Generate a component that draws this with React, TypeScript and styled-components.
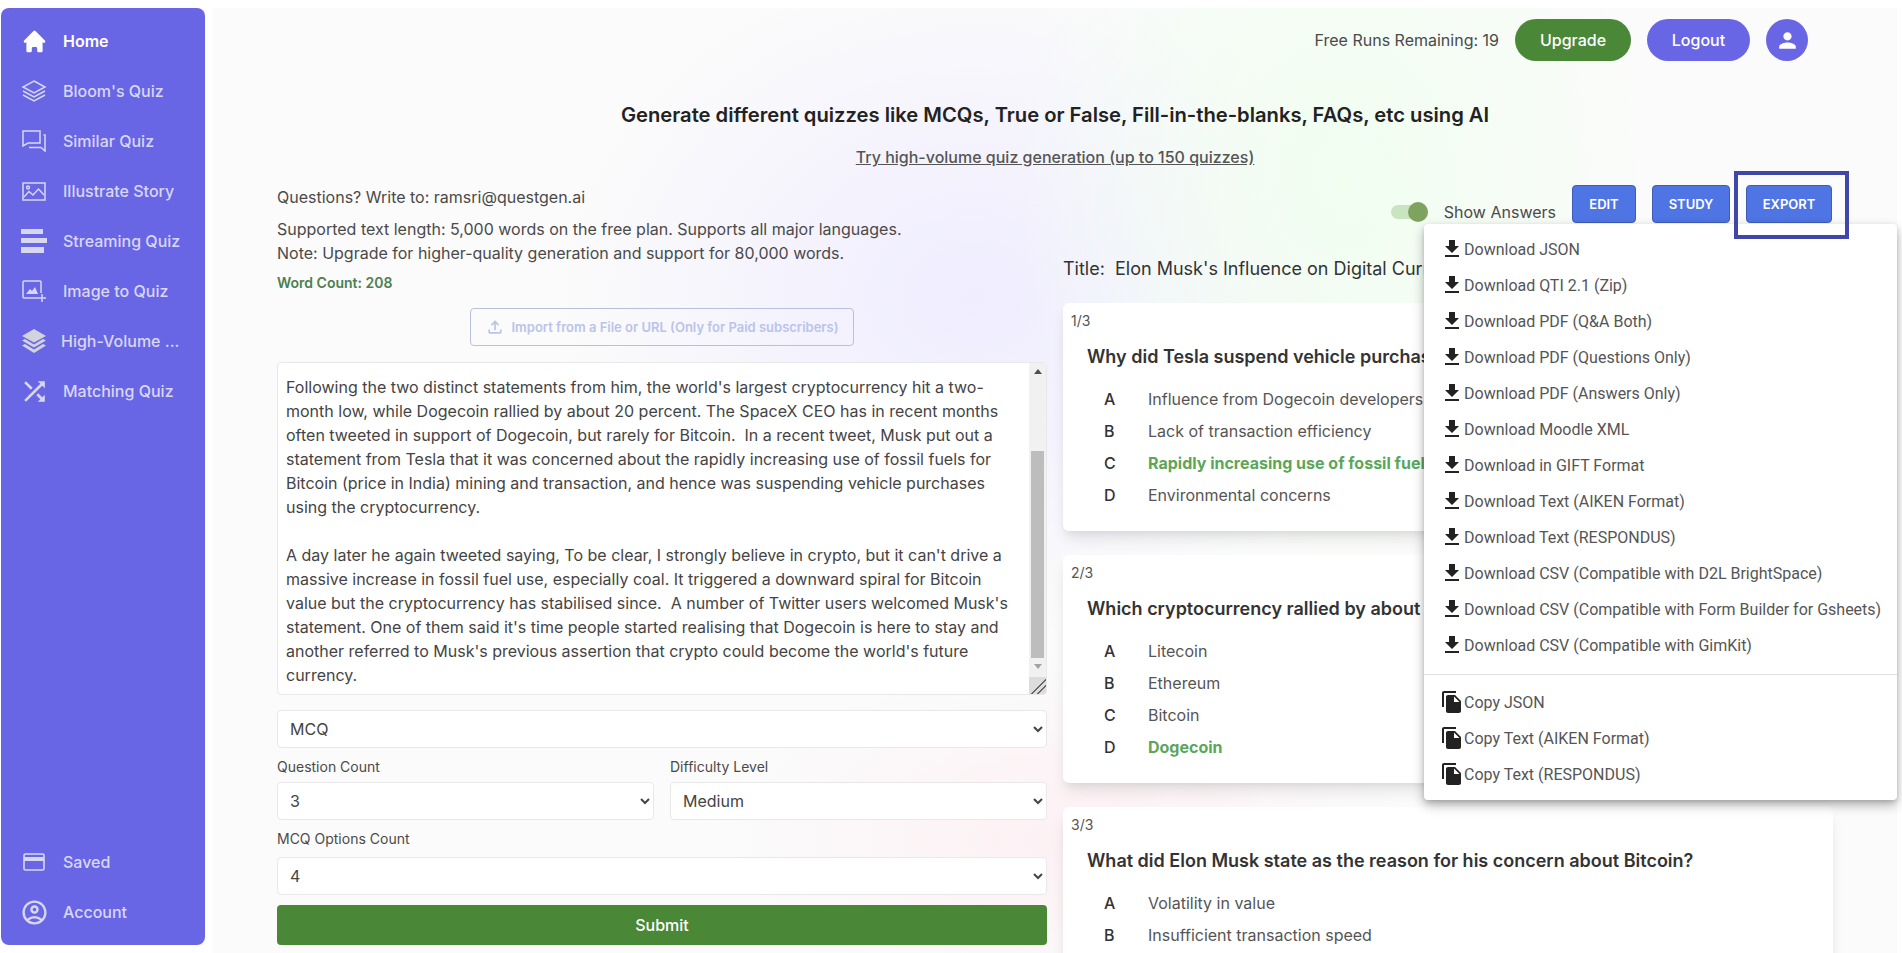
import React from "react";
import styled, { createGlobalStyle } from "styled-components";
import { HiHome } from "react-icons/hi";
import {
  MdOutlineAccountCircle,
  MdShuffle,
  MdFileDownload,
  MdFileCopy,
  MdPerson,
  MdOutlineFileUpload,
} from "react-icons/md";

const Global = createGlobalStyle`
  html, body { margin: 0; padding: 0; height: 100%; overflow: hidden; background: #fff; }
  * { box-sizing: border-box; }
  body { font-family: Inter, "Liberation Sans", sans-serif; color: #444; }
`;

const Page = styled.div`
  display: flex;
  gap: 8px;
  height: 100vh;
  padding: 8px 5px 0 1px;
  overflow: hidden;
`;

const Sidebar = styled.nav`
  flex: 0 0 204px;
  height: 937px;
  padding: 8px 0;
  display: flex;
  flex-direction: column;
  justify-content: space-between;
  background: #6966e6;
  border-radius: 8px;
`;

const NavGroup = styled.div`
  display: flex;
  flex-direction: column;
`;

const NavItem = styled.div<{ $active?: boolean; $tight?: boolean }>`
  height: 50px;
  display: flex;
  align-items: center;
  gap: ${(p) => (p.$tight ? 14 : 16)}px;
  padding-left: 20px;
  font-size: 16px;
  font-weight: ${(p) => (p.$active ? 600 : 500)};
  color: ${(p) => (p.$active ? "#ffffff" : "#d8d7f7")};
`;

const NavIcon = styled.span<{ $active?: boolean }>`
  width: 26px;
  height: 26px;
  display: flex;
  align-items: center;
  justify-content: center;
  color: ${(p) => (p.$active ? "#ffffff" : "#d8d7f0")};
  svg { display: block; flex: none; }
`;

const Main = styled.main`
  position: relative;
  flex: 1;
  min-width: 0;
  height: 1100px;
  padding: 11px 64px 0;
  background:
    radial-gradient(ellipse 330px 420px at 1130px 170px, #f1fef0 0%, rgba(241, 254, 240, 0) 100%),
    radial-gradient(ellipse 420px 340px at 760px 290px, #efedff 0%, rgba(239, 237, 255, 0) 100%),
    radial-gradient(ellipse 340px 180px at 860px 830px, #fdf0f3 0%, rgba(253, 240, 243, 0) 100%),
    #fbfbfb;
`;

const Header = styled.header`
  height: 42px;
  display: flex;
  align-items: center;
  justify-content: flex-end;
  gap: 16px;
  padding-right: 25px;
`;

const Runs = styled.span`
  font-size: 16px;
  color: #4a4a4a;
`;

const Pill = styled.button<{ $green?: boolean }>`
  height: 42px;
  width: ${(p) => (p.$green ? 116 : 103)}px;
  border: 0;
  border-radius: 21px;
  background: ${(p) => (p.$green ? "#4a8737" : "#6966e6")};
  color: #fff;
  font: 500 16px Inter, sans-serif;
`;

const Avatar = styled.div`
  width: 42px;
  height: 42px;
  border-radius: 50%;
  background: #6966e6;
  color: #fff;
  display: flex;
  align-items: center;
  justify-content: center;
`;

const Heading = styled.h1`
  margin: 40px 0 0;
  font-size: 20.2px;
  line-height: 28px;
  font-weight: 600;
  color: #222;
  text-align: center;
`;

const TryLink = styled.a`
  display: block;
  margin-top: 16px;
  font-size: 16px;
  line-height: 24px;
  font-weight: 500;
  color: #555;
  text-align: center;
  text-decoration: underline;
`;

const Columns = styled.div`
  margin-top: 16px;
  display: grid;
  grid-template-columns: 770px 770px;
  gap: 16px;
`;

const Column = styled.section`
  display: flex;
  flex-direction: column;
  min-width: 0;
`;

const InfoLine = styled.p<{ $gap?: number }>`
  margin: ${(p) => p.$gap ?? 0}px 0 0;
  font-size: 16px;
  line-height: 24px;
  color: #4a4a4a;
`;

const WordCount = styled.p`
  margin: 8px 0 0;
  font-size: 14px;
  line-height: 20px;
  font-weight: 600;
  color: #4b8050;
`;

const ImportButton = styled.button`
  align-self: center;
  width: 384px;
  height: 38px;
  margin-top: 15px;
  display: flex;
  align-items: center;
  justify-content: center;
  gap: 6px;
  background: transparent;
  border: 1px solid #b9c0dd;
  border-radius: 4px;
  color: #b9c4ea;
  font: 600 13px Inter, sans-serif;
`;

const TextBox = styled.div`
  height: 333px;
  margin-top: 16px;
  display: flex;
  background: #fff;
  border: 1px solid #e8e8e8;
  border-radius: 4px;
  overflow: hidden;
`;

const TextPane = styled.div`
  flex: 1;
  min-width: 0;
  padding: 12px 0 0 8px;
  font-size: 16px;
  line-height: 24px;
  color: #444;
  white-space: pre;
  overflow: hidden;
`;

const ScrollBar = styled.div`
  flex: 0 0 17px;
  display: flex;
  flex-direction: column;
  align-items: center;
  background: #f1f1f1;
`;

const Arrow = styled.div<{ $down?: boolean }>`
  height: 17px;
  width: 100%;
  display: flex;
  align-items: center;
  justify-content: center;
  &::before {
    content: "";
    border-left: 4px solid transparent;
    border-right: 4px solid transparent;
    ${(p) => (p.$down ? "border-top: 5px solid #a3a3a3;" : "border-bottom: 5px solid #505050;")}
  }
`;

const Thumb = styled.div`
  width: 13px;
  height: 207px;
  margin-top: 71px;
  background: #bdbdbd;
`;

const ResizeCorner = styled.div`
  margin-top: auto;
  width: 100%;
  height: 17px;
  background:
    linear-gradient(135deg, transparent 55%, #666 55%, #666 60%, transparent 60%, transparent 72%, #666 72%, #666 77%, transparent 77%),
    #dcdcdc;
`;

const Select = styled.select`
  display: block;
  width: 100%;
  height: 38px;
  padding: 0 8px;
  background: #fff;
  border: 1px solid #e8e8e8;
  border-radius: 4px;
  color: #444;
  font: 400 16px Inter, sans-serif;
`;

const FieldGap = styled.div<{ $top: number }>`
  margin-top: ${(p) => p.$top}px;
`;

const FieldRow = styled.div`
  margin-top: 9px;
  display: grid;
  grid-template-columns: 1fr 1fr;
  gap: 16px;
`;

const Label = styled.label<{ $mb: number }>`
  display: block;
  margin-bottom: ${(p) => p.$mb}px;
  font-size: 14px;
  line-height: 20px;
  color: #4a4a4a;
`;

const Submit = styled.button`
  height: 40px;
  margin-top: 10px;
  background: #4a8737;
  border: 0;
  border-radius: 4px;
  color: #fff;
  font: 500 16px Inter, sans-serif;
`;

const Controls = styled.div`
  height: 38px;
  display: flex;
  justify-content: flex-end;
  gap: 16px;
  padding-right: 1px;
`;

const ToggleGroup = styled.div`
  display: flex;
  align-items: center;
  gap: 16px;
  padding-top: 16px;
  height: 38px;
  font-size: 16px;
  color: #4a4a4a;
  white-space: nowrap;
`;

const Track = styled.span`
  position: relative;
  display: block;
  width: 37px;
  height: 14px;
  background: #c9e4c1;
  border-radius: 7px;
`;

const Knob = styled.span`
  position: absolute;
  top: -3px;
  right: 0;
  width: 20px;
  height: 20px;
  border-radius: 50%;
  background: #7ea35f;
`;

const ActionButton = styled.button<{ $w: number }>`
  width: ${(p) => p.$w}px;
  height: 38px;
  background: #4f75e4;
  border: 1px solid #3d5db8;
  border-radius: 4px;
  color: #fff;
  font: 600 13px Inter, sans-serif;
`;

const Highlight = styled.div`
  position: absolute;
  left: 1521px;
  top: 163px;
  width: 115px;
  height: 68px;
  border: 4px solid #3f48a8;
  pointer-events: none;
`;

const QuizTitle = styled.h2`
  margin: 32px 0 20px;
  font-size: 18px;
  line-height: 28px;
  font-weight: 400;
  color: #333;
  white-space: pre;
`;

const Card = styled.article`
  margin-bottom: 24px;
  padding: 8px 0 20px;
  background: #fff;
  border-radius: 6px;
  box-shadow: 0 10px 15px -3px rgba(0, 0, 0, 0.1), 0 4px 6px -2px rgba(0, 0, 0, 0.05);
`;

const CardIndex = styled.div`
  padding-left: 8px;
  font-size: 14px;
  line-height: 20px;
  color: #555;
`;

const Question = styled.h3`
  margin: 12px 0;
  padding-left: 24px;
  font-size: 18px;
  line-height: 28px;
  font-weight: 600;
  color: #333;
`;

const Option = styled.div`
  height: 32px;
  display: flex;
  align-items: center;
  padding-left: 41px;
  font-size: 16px;
`;

const Letter = styled.span`
  width: 44px;
  font-weight: 500;
  color: #333;
`;

const OptionText = styled.span<{ $right?: boolean }>`
  color: ${(p) => (p.$right ? "#5ca65a" : "#555")};
  font-weight: ${(p) => (p.$right ? 700 : 400)};
  white-space: nowrap;
`;

const Menu = styled.div`
  position: absolute;
  left: 1211px;
  top: 216px;
  width: 473px;
  padding: 7px 0 8px;
  background: #fff;
  border-radius: 4px;
  box-shadow: 0 5px 12px rgba(0, 0, 0, 0.3), 0 2px 4px rgba(0, 0, 0, 0.12);
`;

const MenuItem = styled.div`
  height: 36px;
  display: flex;
  align-items: center;
  padding-left: 16px;
  font-family: Roboto, sans-serif;
  font-size: 16px;
  color: #555;
  svg { flex: none; color: #222; }
`;

const MenuDivider = styled.hr`
  margin: 11px 0 9px;
  border: 0;
  border-top: 1px solid #e0e0e0;
`;

const stroke = { fill: "none", stroke: "currentColor", strokeWidth: 1.5 } as const;

const LayersLine = () => (
  <svg width="26" height="22" viewBox="0 0 26 22" {...stroke}>
    <path d="M13 1 L24 7 L13 13 L2 7 Z" />
    <path d="M2 11 L13 17 L24 11" />
    <path d="M2 15 L13 21 L24 15" />
  </svg>
);
const Chat = () => (
  <svg width="24" height="22" viewBox="0 0 24 22" {...stroke}>
    <path d="M1 1 H18 V13 H6 L1 16 Z" />
    <path d="M21.5 5 H23 V21 L19 17.5 H7" />
  </svg>
);
const Picture = () => (
  <svg width="24" height="19" viewBox="0 0 24 19" {...stroke}>
    <rect x="1" y="1" width="22" height="17" />
    <circle cx="6" cy="5.5" r="1.4" />
    <path d="M2 15 L7 9.5 L11 13 L16.5 7 L22 13" />
  </svg>
);
const Bars = () => (
  <svg width="26" height="24" viewBox="0 0 26 24" fill="currentColor">
    <rect x="0" y="0" width="22" height="5" />
    <rect x="0" y="9" width="26" height="5" />
    <rect x="0" y="18" width="23" height="6" />
  </svg>
);
const AddImage = () => (
  <svg width="24" height="22" viewBox="0 0 24 22" {...stroke}>
    <path d="M16 18 H2 Q1 18 1 17 V2 Q1 1 2 1 H18 Q19 1 19 2 V13" />
    <path d="M4 14 L8 9 L10 11 L13 7 L16 14 Z" fill="currentColor" stroke="none" />
    <path d="M20 14 V22 M16 18 H24" />
  </svg>
);
const LayersSolid = () => (
  <svg width="24" height="24" viewBox="0 0 24 24" fill="#d3d3dc">
    <path d="M12 0 L24 7 L12 13.5 L0 7 Z" />
    <path d="M0 11.5 L3 10 L12 15.5 L21 10 L24 11.5 L12 18.5 Z" />
    <path d="M0 16.5 L3 15 L12 20.5 L21 15 L24 16.5 L12 24 Z" />
  </svg>
);
const Card2 = () => (
  <svg width="22" height="18" viewBox="0 0 22 18">
    <rect x="1" y="1" width="20" height="16" rx="1.5" fill="none" stroke="currentColor" strokeWidth="1.6" />
    <rect x="1" y="4" width="20" height="4" fill="currentColor" />
  </svg>
);

const top = [
  { icon: <HiHome size={27} />, label: "Home", active: true },
  { icon: <LayersLine />, label: "Bloom's Quiz" },
  { icon: <Chat />, label: "Similar Quiz" },
  { icon: <Picture />, label: "Illustrate Story" },
  { icon: <Bars />, label: "Streaming Quiz" },
  { icon: <AddImage />, label: "Image to Quiz" },
  { icon: <LayersSolid />, label: "High-Volume ...", tight: true },
  { icon: <MdShuffle size={31} />, label: "Matching Quiz" },
];

const bottom = [
  { icon: <Card2 />, label: "Saved" },
  { icon: <MdOutlineAccountCircle size={29} />, label: "Account" },
];

const passage = `Following the two distinct statements from him, the world's largest cryptocurrency hit a two-
month low, while Dogecoin rallied by about 20 percent. The SpaceX CEO has in recent months
often tweeted in support of Dogecoin, but rarely for Bitcoin.  In a recent tweet, Musk put out a
statement from Tesla that it was concerned about the rapidly increasing use of fossil fuels for
Bitcoin (price in India) mining and transaction, and hence was suspending vehicle purchases
using the cryptocurrency.

A day later he again tweeted saying, To be clear, I strongly believe in crypto, but it can't drive a
massive increase in fossil fuel use, especially coal. It triggered a downward spiral for Bitcoin
value but the cryptocurrency has stabilised since.  A number of Twitter users welcomed Musk's
statement. One of them said it's time people started realising that Dogecoin is here to stay and
another referred to Musk's previous assertion that crypto could become the world's future
currency.`;

const quiz = [
  {
    q: "Why did Tesla suspend vehicle purchases using the cryptocurrency?",
    options: ["Influence from Dogecoin developers", "Lack of transaction efficiency", "Rapidly increasing use of fossil fuels", "Environmental concerns"],
    right: 2,
  },
  {
    q: "Which cryptocurrency rallied by about 20 percent?",
    options: ["Litecoin", "Ethereum", "Bitcoin", "Dogecoin"],
    right: 3,
  },
  {
    q: "What did Elon Musk state as the reason for his concern about Bitcoin?",
    options: ["Volatility in value", "Insufficient transaction speed", "Use of fossil fuels", "Regulation"],
    right: 2,
  },
];

const downloads = [
  "Download JSON",
  "Download QTI 2.1 (Zip)",
  "Download PDF (Q&A Both)",
  "Download PDF (Questions Only)",
  "Download PDF (Answers Only)",
  "Download Moodle XML",
  "Download in GIFT Format",
  "Download Text (AIKEN Format)",
  "Download Text (RESPONDUS)",
  "Download CSV (Compatible with D2L BrightSpace)",
  "Download CSV (Compatible with Form Builder for Gsheets)",
  "Download CSV (Compatible with GimKit)",
];

const copies = ["Copy JSON", "Copy Text (AIKEN Format)", "Copy Text (RESPONDUS)"];

export default function App() {
  return (
    <Page>
      <Global />
      <Sidebar>
        <NavGroup>
          {top.map((n) => (
            <NavItem key={n.label} $active={n.active} $tight={n.tight}>
              <NavIcon $active={n.active}>{n.icon}</NavIcon>
              {n.label}
            </NavItem>
          ))}
        </NavGroup>
        <NavGroup>
          {bottom.map((n) => (
            <NavItem key={n.label}>
              <NavIcon>{n.icon}</NavIcon>
              {n.label}
            </NavItem>
          ))}
        </NavGroup>
      </Sidebar>
      <Main>
        <Header>
          <Runs>Free Runs Remaining: 19</Runs>
          <Pill $green>Upgrade</Pill>
          <Pill>Logout</Pill>
          <Avatar>
            <MdPerson size={25} />
          </Avatar>
        </Header>
        <Heading>Generate different quizzes like MCQs, True or False, Fill-in-the-blanks, FAQs, etc using AI</Heading>
        <TryLink>Try high-volume quiz generation (up to 150 quizzes)</TryLink>
        <Columns>
          <Column>
            <InfoLine>Questions? Write to: ramsri@questgen.ai</InfoLine>
            <InfoLine $gap={8}>Supported text length: 5,000 words on the free plan. Supports all major languages.</InfoLine>
            <InfoLine>Note: Upgrade for higher-quality generation and support for 80,000 words.</InfoLine>
            <WordCount>Word Count: 208</WordCount>
            <ImportButton>
              <MdOutlineFileUpload size={20} />
              Import from a File or URL (Only for Paid subscribers)
            </ImportButton>
            <TextBox>
              <TextPane>{passage}</TextPane>
              <ScrollBar>
                <Arrow />
                <Thumb />
                <Arrow $down />
                <ResizeCorner />
              </ScrollBar>
            </TextBox>
            <FieldGap $top={15}>
              <Select defaultValue="MCQ">
                <option>MCQ</option>
              </Select>
            </FieldGap>
            <FieldRow>
              <div>
                <Label $mb={5}>Question Count</Label>
                <Select defaultValue="3">
                  <option>3</option>
                </Select>
              </div>
              <div>
                <Label $mb={5}>Difficulty Level</Label>
                <Select defaultValue="Medium">
                  <option>Medium</option>
                </Select>
              </div>
            </FieldRow>
            <FieldGap $top={9}>
              <Label $mb={8}>MCQ Options Count</Label>
              <Select defaultValue="4">
                <option>4</option>
              </Select>
            </FieldGap>
            <Submit>Submit</Submit>
          </Column>
          <Column>
            <Controls>
              <ToggleGroup>
                <Track>
                  <Knob />
                </Track>
                Show Answers
              </ToggleGroup>
              <ActionButton $w={64}>EDIT</ActionButton>
              <ActionButton $w={78}>STUDY</ActionButton>
              <ActionButton $w={86}>EXPORT</ActionButton>
            </Controls>
            <QuizTitle>{"Title:  Elon Musk's Influence on Digital Currency"}</QuizTitle>
            {quiz.map((c, i) => (
              <Card key={c.q}>
                <CardIndex>{i + 1}/3</CardIndex>
                <Question>{c.q}</Question>
                {c.options.map((o, j) => (
                  <Option key={o}>
                    <Letter>{"ABCD"[j]}</Letter>
                    <OptionText $right={j === c.right}>{o}</OptionText>
                  </Option>
                ))}
              </Card>
            ))}
          </Column>
        </Columns>
        <Menu>
          {downloads.map((d) => (
            <MenuItem key={d}>
              <MdFileDownload size={24} />
              {d}
            </MenuItem>
          ))}
          <MenuDivider />
          {copies.map((d) => (
            <MenuItem key={d}>
              <MdFileCopy size={24} />
              {d}
            </MenuItem>
          ))}
        </Menu>
        <Highlight />
      </Main>
    </Page>
  );
}
